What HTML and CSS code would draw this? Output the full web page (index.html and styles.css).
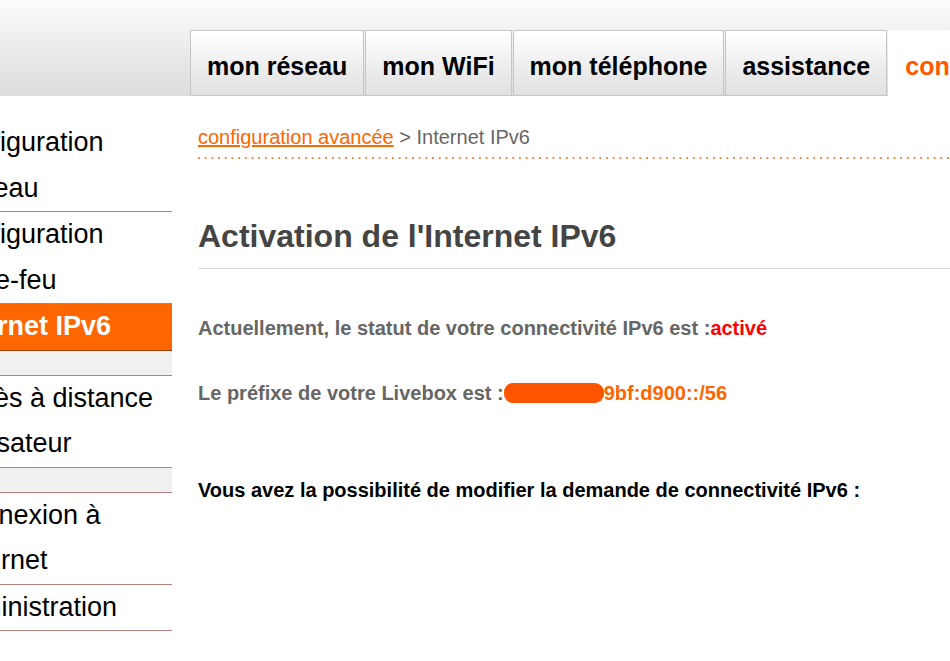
FILE: index.html
```html
<!DOCTYPE html>
<html lang="fr">
<head>
  <meta charset="UTF-8" />
  <title>Livebox - Internet IPv6</title>
  <link rel="stylesheet" href="styles.css">
</head>
<body>
  <header class="top">
    <nav class="tabs">
      <a class="tab">mon réseau</a>
      <a class="tab">mon WiFi</a>
      <a class="tab">mon téléphone</a>
      <a class="tab">assistance</a>
      <a class="tab active">configuration avancée</a>
    </nav>
  </header>

  <div class="page">
    <aside class="sidebar">
      <ul class="menu">
        <li>configuration réseau</li>
        <li>configuration pare-feu</li>
        <li class="active">Internet IPv6</li>
        <li class="spacer"></li>
        <li>Accès à distance utilisateur</li>
        <li class="spacer"></li>
        <li>Connexion à Internet</li>
        <li>administration</li>
      </ul>
    </aside>

    <main class="content">
      <div class="crumbs">
        <a href="#">configuration avancée</a> &gt; Internet IPv6
      </div>

      <h1>Activation de l'Internet IPv6</h1>

      <p class="status">Actuellement, le statut de votre connectivité IPv6 est :<span class="on">activé</span></p>
      <p class="status prefix-line">Le préfixe de votre Livebox est :<span class="prefix"><span class="redacted"></span>9bf:d900::/56</span></p>

      <p class="question">Vous avez la possibilité de modifier la demande de connectivité IPv6 :</p>
    </main>
  </div>
</body>
</html>
```

FILE: styles.css
```css
* { box-sizing: border-box; }
body {
  margin: 0;
  font-family: "Liberation Sans", Arial, sans-serif;
  background: #fff;
  color: #000;
  overflow: hidden;
}
.top {
  height: 96px;
  background: linear-gradient(to bottom, #fbfbfb, #dcdcdc);
}
.tabs {
  display: flex;
  padding: 30px 0 0 190px;
  white-space: nowrap;
  overflow: hidden;
}
.tab {
  flex: none;
  height: 66px;
  line-height: 58px;
  padding: 6px 16px 0;
  margin-right: 1px;
  border: 1px solid #c6c6c6;
  background: linear-gradient(to bottom, #ffffff, #e0e0e0);
  font-size: 25px;
  font-weight: bold;
  color: #000;
  cursor: pointer;
}
.tab.active {
  background: #fff;
  border-color: #fff;
  color: #ff5a00;
}
.page {
  display: flex;
  gap: 26px;
  padding-top: 24px;
}
.sidebar {
  flex: none;
  width: 172px;
  overflow: hidden;
}
.menu {
  list-style: none;
  margin: 0 0 0 -44px;
  padding: 0;
}
.menu li {
  font-size: 27px;
  line-height: 45.5px;
  text-indent: -7px;
  border-bottom: 1px solid #b58080;
  color: #000;
}
.menu li.active {
  background: #ff6600;
  color: #fff;
  font-weight: bold;
  border-bottom-color: #a33a00;
}
.menu li.spacer {
  height: 25px;
  background: #f0f0f0;
}
.content {
  flex: 1;
  padding-top: 5px;
}
.crumbs {
  font-size: 20px;
  line-height: 24px;
  color: #666;
  padding-bottom: 10px;
  background: linear-gradient(to right, #f58a4a 2px, transparent 2px) left bottom / 6.7px 2px repeat-x;
  margin-right: -20px;
}
.crumbs a {
  color: #ff6600;
  text-decoration: underline;
}
.content h1 {
  margin: 59px 0 0;
  font-size: 32px;
  line-height: 37px;
  color: #444;
  padding-bottom: 13px;
  border-bottom: 1px solid #dcdcdc;
  margin-right: -20px;
}
.status {
  font-size: 20px;
  line-height: 24px;
  font-weight: bold;
  color: #666;
  margin: 47px 0 0;
}
.status.prefix-line { margin-top: 41px; }
.on { color: #ff0000; }
.prefix { color: #ff6600; }
.redacted {
  display: inline-block;
  width: 100px;
  height: 20px;
  vertical-align: -3px;
  border-radius: 9px;
  background: #ff5500;
}
.question {
  font-size: 20px;
  line-height: 24px;
  font-weight: bold;
  margin: 73px 0 0;
}
```
